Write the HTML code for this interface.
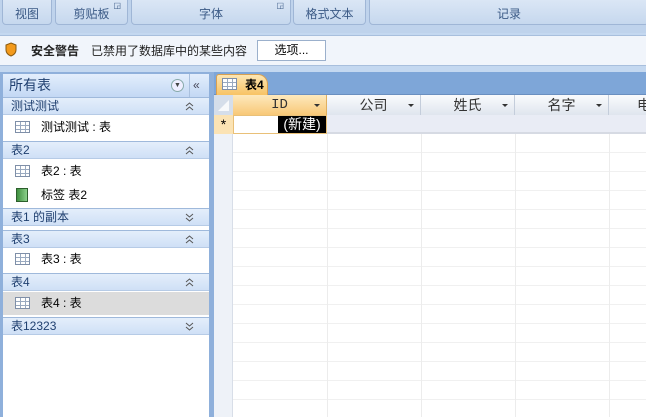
<!DOCTYPE html>
<html><head><meta charset="utf-8"><style>
*{margin:0;padding:0;box-sizing:border-box}
body{width:646px;height:417px;overflow:hidden;position:relative;background:#fff;font-family:"Liberation Sans","Noto Sans CJK SC",sans-serif;font-size:12px;color:#000}
.a{position:absolute}
.grp{position:absolute;top:-4px;height:29px;border:1px solid #9fb6d6;border-radius:0 0 4px 4px;background:linear-gradient(#dde8f6,#c6d8ee);color:#3b5a86;font-size:12px;text-align:center;line-height:34px}
.nh{position:absolute;left:3px;width:206px;height:18px;background:linear-gradient(#e4eefb,#cfe0f6);border-top:1px solid #9fb9db;border-bottom:1px solid #b6cbe6;color:#1f3f6f;padding-left:8px;line-height:17px}
.nh svg{position:absolute;right:15px;top:4px}
.ni{position:absolute;left:3px;width:206px;height:22px;line-height:22px;padding-left:38px;color:#000}
.ti{position:absolute;left:12px;top:5px;width:15px;height:12px;border:1px solid #7f8fa8;background:repeating-linear-gradient(90deg,transparent 0 4px,#9aaac0 4px 5px),repeating-linear-gradient(#fff 0 3px,#9aaac0 3px 4px)}
.hc{position:absolute;top:95px;height:20px;border-right:1px solid #c4cddb;background:linear-gradient(#fafbfd,#dfe5ee);text-align:center;font-size:14px;line-height:20px;color:#333}
.hc i{position:absolute;right:6px;top:9px;border:3px solid transparent;border-top:3px solid #333;border-bottom:0}
.vl{position:absolute;top:115px;bottom:0;width:1px;background:#ececec}
</style></head><body>
<div class="a" style="left:0;top:0;width:646px;height:33px;background:#bfd3ec"></div>
<div class="grp" style="left:2px;width:50px">视图</div>
<div class="grp" style="left:55px;width:73px">剪贴板<span style="font-size:8px;position:absolute;right:6px;top:-8px">◲</span></div>
<div class="grp" style="left:131px;width:160px">字体<span style="font-size:8px;position:absolute;right:6px;top:-8px">◲</span></div>
<div class="grp" style="left:293px;width:73px">格式文本</div>
<div class="grp" style="left:369px;width:280px">记录</div>
<div class="a" style="left:0;top:33px;width:646px;height:39px;background:#c4d8f0"></div>
<div class="a" style="left:0;top:35px;width:646px;height:31px;background:#f1f5fb;border-top:1px solid #a8bfdd;border-bottom:1px solid #a8bfdd"></div>
<svg class="a" style="left:5px;top:42px" width="12" height="15"><path d="M6 1 L11 3 L11 8 Q11 12 6 14 Q1 12 1 8 L1 3Z" fill="#f39a1c" stroke="#8a5a10" stroke-width="1"/></svg>
<div class="a" style="left:31px;top:42px;font-weight:bold;color:#222">安全警告</div>
<div class="a" style="left:91px;top:42px;color:#222">已禁用了数据库中的某些内容</div>
<div class="a" style="left:257px;top:40px;width:69px;height:21px;border:1px solid #9bb0cc;background:#fff;text-align:center;line-height:19px">选项...</div>
<div class="a" style="left:0;top:72px;width:214px;height:345px;background:#8fb0db"></div>
<div class="a" style="left:3px;top:74px;width:206px;height:343px;background:#fff"></div>
<div class="a" style="left:3px;top:74px;width:206px;height:23px;background:linear-gradient(#e3eefc,#c3d8f4);color:#1f3f6f;font-size:14px;line-height:23px;padding-left:6px">所有表
<span style="position:absolute;left:168px;top:5px;width:13px;height:13px;border:1px solid #8aa;border-radius:50%;background:#eef;font-size:7px;line-height:11px;text-align:center;color:#444">▼</span>
<span style="position:absolute;left:186px;top:0;width:1px;height:23px;background:#a9c0de"></span>
<span style="position:absolute;left:190px;top:0;color:#445;font-size:12px">«</span></div>
<div class="nh" style="top:97px">测试测试<svg width="9" height="9"><path d="M1 4 L4.5 1 L8 4 M1 8 L4.5 5 L8 8" fill="none" stroke="#555"/></svg></div>
<div class="ni" style="top:116px"><i class="ti"></i>测试测试 : 表</div>
<div class="nh" style="top:141px">表2<svg width="9" height="9"><path d="M1 4 L4.5 1 L8 4 M1 8 L4.5 5 L8 8" fill="none" stroke="#555"/></svg></div>
<div class="ni" style="top:160px"><i class="ti"></i>表2 : 表</div>
<div class="ni" style="top:184px"><i class="a" style="left:13px;top:4px;width:12px;height:14px;border:1px solid #2c5f2c;background:linear-gradient(90deg,#3f8f3f,#8cd08c)"></i>标签 表2</div>
<div class="nh" style="top:208px">表1 的副本<svg width="9" height="9"><path d="M1 1 L4.5 4 L8 1 M1 5 L4.5 8 L8 5" fill="none" stroke="#555"/></svg></div>
<div class="nh" style="top:230px">表3<svg width="9" height="9"><path d="M1 4 L4.5 1 L8 4 M1 8 L4.5 5 L8 8" fill="none" stroke="#555"/></svg></div>
<div class="ni" style="top:248px"><i class="ti"></i>表3 : 表</div>
<div class="nh" style="top:273px">表4<svg width="9" height="9"><path d="M1 4 L4.5 1 L8 4 M1 8 L4.5 5 L8 8" fill="none" stroke="#555"/></svg></div>
<div class="ni" style="top:292px;background:#dcdcdc;height:23px"><i class="ti"></i>表4 : 表</div>
<div class="nh" style="top:317px">表12323<svg width="9" height="9"><path d="M1 1 L4.5 4 L8 1 M1 5 L4.5 8 L8 5" fill="none" stroke="#555"/></svg></div>
<div class="a" style="left:214px;top:72px;width:432px;height:23px;background:#7ea6d8;border-bottom:1px solid #6a8fc0"></div>
<div class="a" style="left:216px;top:74px;width:52px;height:22px;background:linear-gradient(#fde6b3,#f7c160);border:1px solid #d8a050;border-bottom:0;border-radius:3px 10px 0 0;font-weight:bold;line-height:20px;padding-left:28px">表4</div>
<i class="ti" style="left:222px;top:78px"></i>
<div class="a" style="left:214px;top:95px;width:432px;height:322px;background:#fff"></div>
<div class="a" style="left:214px;top:95px;width:19px;height:322px;background:#eef2f8;border-right:1px solid #d8dee8"></div>
<div class="a" style="left:214px;top:95px;width:19px;height:20px;background:#d5deea"><svg width="19" height="20"><path d="M4 16 L15 16 L15 5Z" fill="#fff" opacity=".8"/></svg></div>
<div class="hc" style="left:233px;width:94px;background:linear-gradient(#fde9bd,#f8c877);border-right:1px solid #e0b060;font-family:'Liberation Mono',monospace">ID<i></i></div>
<div class="hc" style="left:327px;width:94px">公司<i></i></div>
<div class="hc" style="left:421px;width:94px">姓氏<i></i></div>
<div class="hc" style="left:515px;width:94px">名字<i></i></div>
<div class="hc" style="left:609px;width:60px;text-align:left;padding-left:28px">电</div>
<div class="a" style="left:233px;top:115px;width:413px;height:19px;background:#e9ecf5;border-bottom:2px solid #d6dae3"></div>
<div class="a" style="left:214px;top:115px;width:19px;height:19px;background:#fbe3b4;text-align:center;line-height:19px;font-size:14px">*</div>
<div class="a" style="left:233px;top:115px;width:94px;height:19px;background:#fff;border:1px solid #e9c078"></div>
<div class="a" style="left:278px;top:116px;width:48px;height:17px;background:#000;color:#fff;font-size:14px;line-height:17px;text-align:center">(新建)</div>
<div class="a" style="left:233px;top:134px;width:413px;height:283px;background:repeating-linear-gradient(#fff 0 18px,#f0f0f0 18px 19px)"></div>
<div class="vl" style="left:327px;top:134px"></div>
<div class="vl" style="left:421px;top:134px"></div>
<div class="vl" style="left:515px;top:134px"></div>
<div class="vl" style="left:609px;top:134px"></div>
</body></html>
